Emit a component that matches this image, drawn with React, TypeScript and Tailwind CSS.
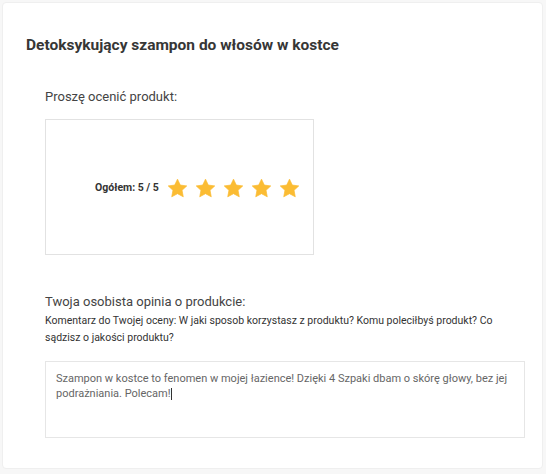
function Star() {
  return (
    <svg width="21" height="21" viewBox="0 0 24 24" className="shrink-0">
      <path
        d="M12 1.3l3.2 6.8 7.4.9-5.4 5.1 1.4 7.4L12 17.9l-6.6 3.6 1.4-7.4-5.4-5.1 7.4-.9z"
        fill="#fbbc33"
        stroke="#fbbc33"
        strokeWidth="0.8"
        strokeLinejoin="round"
      />
    </svg>
  );
}

export default function App() {
  return (
    <div className="w-[546px] h-[474px] bg-[#f7f7f7] p-[2px] font-['Roboto',sans-serif]">
      <div className="h-[467px] w-[541px] bg-white border border-[#efefef] rounded-[4px] pl-[23px] pt-[32px]">
        <h1 className="text-[15.5px] font-bold text-[#363636] leading-[20px]">
          Detoksykujący szampon do włosów w kostce
        </h1>

        <div className="pl-[19px] pt-[34px]">
          <p className="text-[13px] text-[#444] leading-[16px]">Proszę ocenić produkt:</p>

          <div className="mt-[14px] w-[269px] h-[136px] border border-[#e2e2e2] flex items-center pl-[49px] pt-[2px]">
            <span className="text-[10.5px] font-bold text-[#333] whitespace-nowrap mr-[8px]">Ogółem: 5 / 5</span>
            <div className="flex gap-[7px]">
              <Star />
              <Star />
              <Star />
              <Star />
              <Star />
            </div>
          </div>

          <p className="mt-[39px] text-[13px] text-[#444] leading-[16px]">
            Twoja osobista opinia o produkcie:
          </p>
          <p className="mt-[2px] text-[10.5px] text-[#333] leading-[17px] w-[470px]">
            Komentarz do Twojej oceny: W jaki sposob korzystasz z produktu? Komu poleciłbyś produkt? Co
            sądzisz o jakości produktu?
          </p>

          <div className="mt-[15px] w-[480px] h-[77px] border border-[#e6e6e6] px-[10px] pt-[9px]">
            <p className="text-[11px] text-[#666] leading-[15px]">
              Szampon w kostce to fenomen w mojej łazience! Dzięki 4 Szpaki dbam o skórę głowy, bez jej
              podrażniania. Polecam!<span className="inline-block w-px h-[12px] bg-[#333] align-middle"></span>
            </p>
          </div>
        </div>
      </div>
    </div>
  );
}
